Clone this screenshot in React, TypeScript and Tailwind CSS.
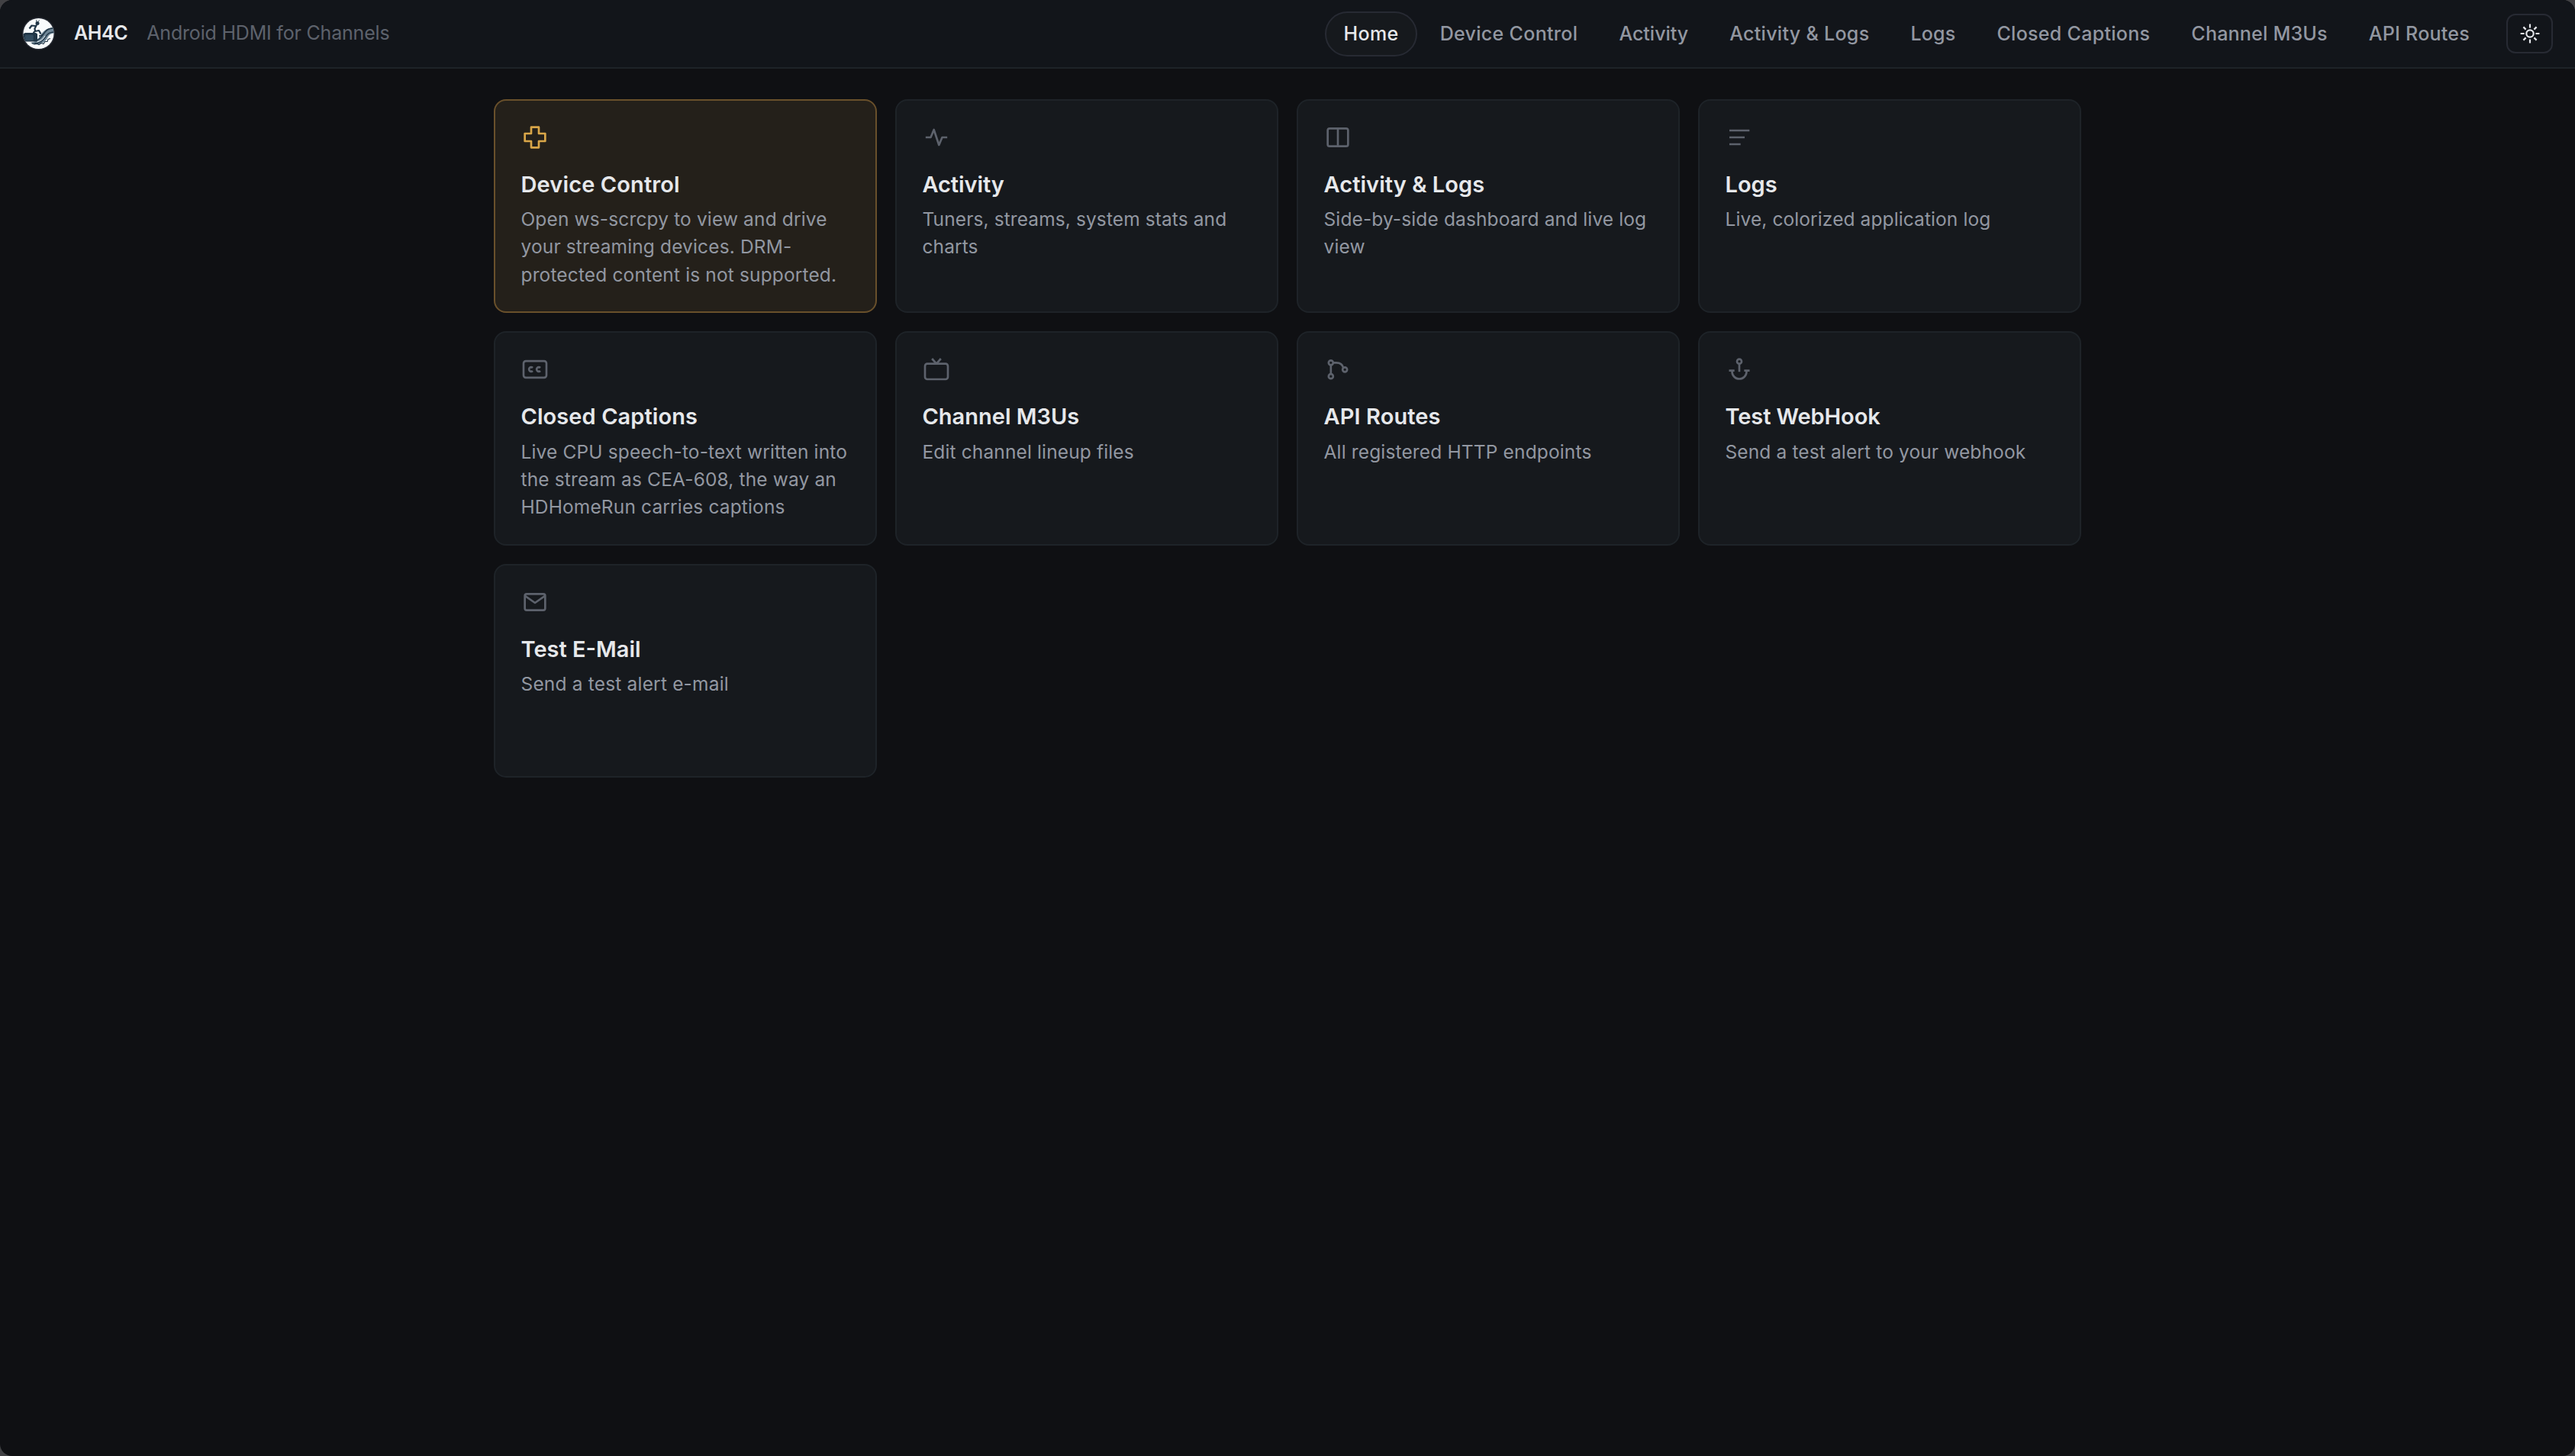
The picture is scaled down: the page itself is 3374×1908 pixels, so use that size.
import type { ReactNode } from "react";
import clsx from "clsx";

type NavItem = { label: string; tracking: string; active?: boolean };

const navItems: NavItem[] = [
  { label: "Home", tracking: "tracking-[0.4px]", active: true },
  { label: "Device Control", tracking: "tracking-[0.32px]" },
  { label: "Activity", tracking: "tracking-[0px]" },
  { label: "Activity & Logs", tracking: "tracking-[0.3px]" },
  { label: "Logs", tracking: "tracking-[0.2px]" },
  { label: "Closed Captions", tracking: "tracking-[0.3px]" },
  { label: "Channel M3Us", tracking: "tracking-[0.22px]" },
  { label: "API Routes", tracking: "tracking-[0.26px]" },
];

type Tile = {
  title: string;
  text: string;
  icon: ReactNode;
  titleTracking: string;
  textTracking: string;
  accent?: boolean;
};

const tiles: Tile[] = [
  {
    title: "Device Control",
    text: "Open ws-scrcpy to view and drive your streaming devices. DRM-protected content is not supported.",
    titleTracking: "tracking-[0.12px]",
    textTracking: "tracking-[0.14px]",
    accent: true,
    icon: <path d="M9 4h6v5h5v6h-5v5H9v-5H4V9h5z" />,
  },
  {
    title: "Activity",
    text: "Tuners, streams, system stats and charts",
    titleTracking: "tracking-[-0.1px]",
    textTracking: "tracking-[0.1px]",
    icon: <path d="M3.5 12h4L10 6l4 12 2.5-6h4" />,
  },
  {
    title: "Activity & Logs",
    text: "Side-by-side dashboard and live log view",
    titleTracking: "tracking-[0.05px]",
    textTracking: "tracking-[0.12px]",
    icon: (
      <>
        <rect x="4" y="5" width="16" height="14" rx="1.5" />
        <path d="M12 5v14" />
      </>
    ),
  },
  {
    title: "Logs",
    text: "Live, colorized application log",
    titleTracking: "tracking-[0px]",
    textTracking: "tracking-[0.1px]",
    icon: <path d="M4.2 6.6H20M4.2 12h12M4.2 17.4H13" strokeLinecap="butt" />,
  },
  {
    title: "Closed Captions",
    text: "Live CPU speech-to-text written into the stream as CEA-608, the way an HDHomeRun carries captions",
    titleTracking: "tracking-[0.08px]",
    textTracking: "tracking-[0.14px]",
    icon: (
      <>
        <rect x="3" y="5.5" width="18" height="13" rx="1.8" />
        <path d="M10.2 10.8a1.7 1.7 0 1 0 0 2.4M16.2 10.8a1.7 1.7 0 1 0 0 2.4" />
      </>
    ),
  },
  {
    title: "Channel M3Us",
    text: "Edit channel lineup files",
    titleTracking: "tracking-[0px]",
    textTracking: "tracking-[0.13px]",
    icon: (
      <>
        <rect x="3" y="7.6" width="18" height="12.2" rx="1.8" />
        <path d="m8.5 3.6 3.5 4 3.5-4" />
      </>
    ),
  },
  {
    title: "API Routes",
    text: "All registered HTTP endpoints",
    titleTracking: "tracking-[0.1px]",
    textTracking: "tracking-[0.15px]",
    icon: (
      <>
        <circle cx="6.5" cy="6.8" r="1.8" />
        <circle cx="6.5" cy="17.5" r="1.8" />
        <circle cx="17.5" cy="12.2" r="1.8" />
        <path d="M6.5 8.6v7.1M8.3 6.8h2.5c3 0 4.9 1.4 5.5 4" />
      </>
    ),
  },
  {
    title: "Test WebHook",
    text: "Send a test alert to your webhook",
    titleTracking: "tracking-[-0.1px]",
    textTracking: "tracking-[0.13px]",
    icon: (
      <>
        <circle cx="12" cy="5.8" r="1.8" />
        <path d="M12 7.6V14M3.9 13h4.3M15.8 13h4.3M6.3 13v.8a5.7 5.7 0 0 0 11.4 0V13" />
      </>
    ),
  },
  {
    title: "Test E-Mail",
    text: "Send a test alert e-mail",
    titleTracking: "tracking-[0px]",
    textTracking: "tracking-[0.18px]",
    icon: (
      <>
        <rect x="4" y="5.6" width="16" height="12.8" rx="1.4" />
        <path d="m4.4 7.3 7.6 5.3 7.6-5.3" />
      </>
    ),
  },
];

function Logo() {
  return (
    <svg viewBox="0 0 44 44" className="size-11">
      <defs>
        <clipPath id="disc">
          <circle cx="22.5" cy="22" r="20" />
        </clipPath>
      </defs>
      <circle cx="22.5" cy="22" r="21.5" fill="#262a33" />
      <circle cx="22.5" cy="22" r="20" fill="#f8fbfc" />
      <g clipPath="url(#disc)">
        {/* wave */}
        <path
          d="M12 34c7-1 10-5 14-11 4-6 9-9 18-9v8c-5-1-8 2-10 6s-6 7-11 8c-4 .8-8 .6-11-2z"
          fill="#6f8797"
        />
        <path
          d="M20 31c6-2 8-7 11-11s6-5 13-5M17 35c8 0 12-4 15-9s6-6 11-6M23 25c3 0 6-2 8-5"
          fill="none"
          stroke="#203546"
          strokeWidth="1.4"
        />
        <path d="M20 33c5-1 9-4 11-8" fill="none" stroke="#e8f0f4" strokeWidth="1" />
        <path
          d="M14 34.5l3 1.5 3-1 3 1.5 3-2 3 1 2-3 3 0 1-3 3-1"
          fill="none"
          stroke="#203546"
          strokeWidth="1.1"
        />
        {/* television */}
        <path d="M2 22.5l3-1.5h14l2 1.5v10H4z" fill="#203546" />
        <rect x="4.8" y="23.8" width="11" height="7.5" rx="1.5" fill="#324b5e" />
        {/* rider */}
        <circle cx="21" cy="8.6" r="2.5" fill="#203546" />
        <path d="M19.5 6.5l.5-2.5M22 6.5l1.5-2" stroke="#203546" strokeWidth="0.9" />
        <path
          d="M20 10.5l-2.5 5 .5 3.5 5-1 2.5 4.5M18.5 12l-5-.5-3 4M18.5 18.5l-3 2.5"
          fill="none"
          stroke="#203546"
          strokeWidth="2.2"
          strokeLinejoin="round"
        />
      </g>
    </svg>
  );
}

function SunIcon() {
  return (
    <svg viewBox="0 0 32 32" className="size-8" fill="none" stroke="#e6e8ec" strokeWidth="2.2">
      <circle cx="16" cy="16" r="4.7" />
      <path d="M16 3.6v5M16 23.4v5M3.6 16h5M23.4 16h5M7.4 7.4l3.2 3.2M21.4 21.4l3.2 3.2M7.4 24.6l3.2-3.2M21.4 10.6l3.2-3.2" />
    </svg>
  );
}

function TileCard({ tile }: { tile: Tile }) {
  return (
    <a
      className={clsx(
        "block rounded-2xl border-2 px-8 py-7",
        tile.accent ? "border-[#69502b] bg-[#24201a]" : "border-[#1e2328] bg-[#16191d]",
      )}
    >
      <svg
        viewBox="0 0 24 24"
        className={clsx("size-10", tile.accent ? "text-[#d9a648]" : "text-[#5d626c]")}
        fill="none"
        stroke="currentColor"
        strokeWidth="1.6"
        strokeLinejoin="round"
      >
        {tile.icon}
      </svg>
      <h2
        className={clsx(
          "mt-6 ml-[1.5px] text-[29px] leading-9 font-semibold text-[#e6e8eb]",
          tile.titleTracking,
        )}
      >
        {tile.title}
      </h2>
      <p
        className={clsx(
          "mt-[9.2px] ml-[1.5px] text-[24.5px] leading-[36.25px] text-[#9297a1]",
          tile.textTracking,
        )}
      >
        {tile.text}
      </p>
    </a>
  );
}

export default function App() {
  return (
    <div className="h-[1908px] w-[3374px] bg-[#414144] font-[Inter,sans-serif]">
      <div className="flex h-full flex-col overflow-hidden rounded-2xl bg-[#0f1013]">
        <header className="flex h-[90px] shrink-0 items-center justify-between border-b-2 border-[#1e2328] bg-[#12151a] pr-[29px] pl-7">
          <div className="flex items-center gap-[25px]">
            <Logo />
            <span className="text-[25px] font-semibold tracking-[-0.4px] text-[#e6e8eb]">AH4C</span>
            <span className="text-[25px] tracking-[-0.2px] text-[#5d626c]">
              Android HDMI for Channels
            </span>
          </div>
          <div className="flex items-center gap-6">
            <nav className="flex items-center gap-1.5">
              {navItems.map((item) => (
                <a
                  key={item.label}
                  className={clsx(
                    "flex h-[59px] items-center rounded-full border-2 px-[22px] pt-0.5 text-[25px] font-medium whitespace-nowrap",
                    item.tracking,
                    item.active
                      ? "border-[#272a33] bg-[#16191d] text-[#e6e8eb]"
                      : "border-transparent text-[#9297a1]",
                  )}
                >
                  {item.label}
                </a>
              ))}
            </nav>
            <button className="flex h-[52px] w-[61px] items-center justify-center rounded-xl border-2 border-[#272a33]">
              <SunIcon />
            </button>
          </div>
        </header>
        <main className="mx-auto grid w-[2080px] auto-rows-[280.4px] grid-cols-4 gap-6 pt-10">
          {tiles.map((tile) => (
            <TileCard key={tile.title} tile={tile} />
          ))}
        </main>
      </div>
    </div>
  );
}
